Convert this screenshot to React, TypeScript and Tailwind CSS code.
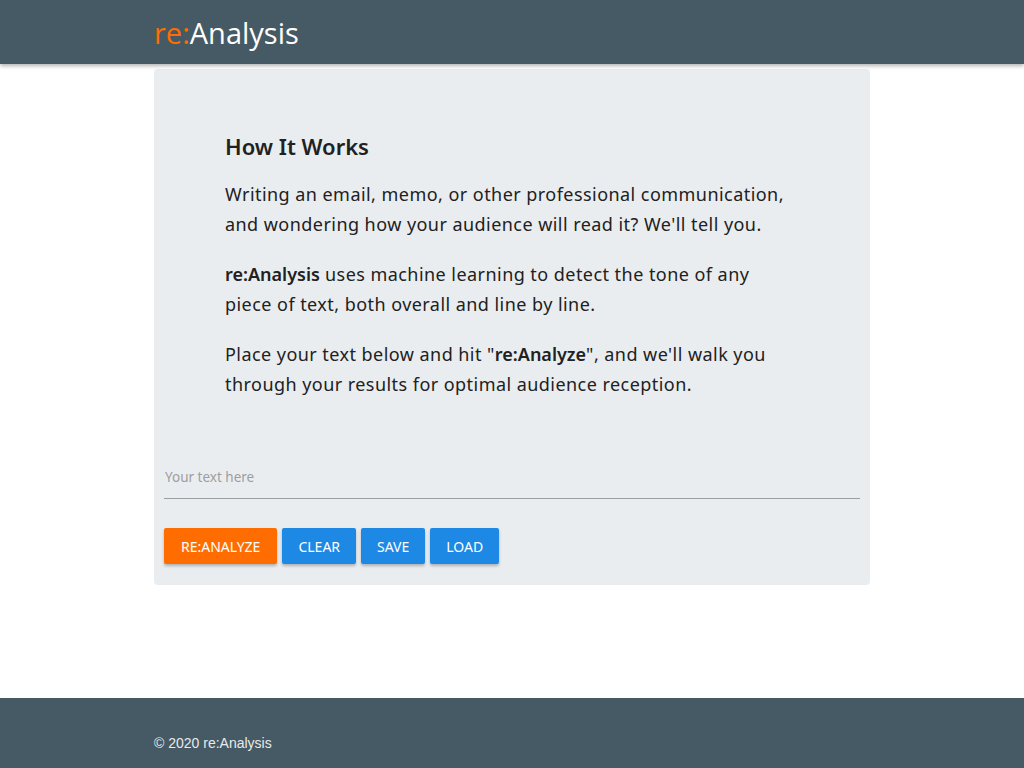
import React from 'react';

const font = { fontFamily: '"Noto Sans", Tahoma, sans-serif' };

// Action buttons below the text area
function ActionButton({ label, orange }: { label: string; orange?: boolean }) {
  return (
    <button
      className={
        orange
          ? 'h-9 px-[17px] rounded-[2px] bg-[#ff6d00] text-white text-[14px] shadow-[0_2px_3px_rgba(0,0,0,0.25)]'
          : 'h-9 px-[16px] rounded-[2px] bg-[#1e88e5] text-white text-[14px] shadow-[0_2px_3px_rgba(0,0,0,0.25)]'
      }
    >
      {label}
    </button>
  );
}

export default function App() {
  return (
    <div className="min-h-[768px] flex flex-col bg-white" style={font}>
      {/* Header */}
      <header className="h-16 bg-[#455a64] shadow-[0_2px_4px_rgba(0,0,0,0.3)] relative z-10">
        <div className="w-[716px] mx-auto h-full flex items-center">
          <span className="text-[29px] leading-none text-white" style={{ fontFamily: '"Open Sans", sans-serif' }}>
            <span className="text-[#ff6d00]">re:</span>Analysis
          </span>
        </div>
      </header>

      {/* Main card */}
      <main className="flex-1">
        <div className="w-[716px] mx-auto mt-[5px] bg-[#eaedf0] rounded-[4px] px-[10px] pb-[21px]">
          <div className="pl-[61px] pr-[60px] pt-[62px] pb-[44px] text-[#212121]">
            <h2 className="text-[22px] font-semibold mb-[18px] leading-[30px]">How It Works</h2>
            <p className="text-[18px] leading-[30px] mb-5 tracking-[0.45px]">
              Writing an email, memo, or other professional communication, and wondering how your audience
              will read it? We'll tell you.
            </p>
            <p className="text-[18px] leading-[30px] mb-5 tracking-[0.45px]">
              <b className="font-semibold tracking-normal">re:Analysis</b> uses machine learning to detect the tone
              of any piece of text, both overall and line by line.
            </p>
            <p className="text-[18px] leading-[30px] tracking-[0.45px]">
              Place your text below and hit "<b className="font-semibold tracking-normal">re:Analyze</b>", and
              we'll walk you through your results for optimal audience reception.
            </p>
          </div>

          <div className="pt-[21px] border-b border-[#9e9e9e] pb-[10px]">
            <input
              className="w-full bg-transparent outline-none text-[13.5px] text-[#212121] placeholder:text-[#9e9e9e] px-[1px]"
              placeholder="Your text here"
            />
          </div>

          <div className="flex gap-[5px] mt-[29px]">
            <ActionButton label="RE:ANALYZE" orange />
            <ActionButton label="CLEAR" />
            <ActionButton label="SAVE" />
            <ActionButton label="LOAD" />
          </div>
        </div>
      </main>

      {/* Footer */}
      <footer className="h-[70px] bg-[#455a64]">
        <div
          className="w-[716px] mx-auto pt-[35px] text-[14px] text-[#e8eaeb]"
          style={{ fontFamily: '"Liberation Sans", Arial, sans-serif' }}
        >
          © 2020 re:Analysis
        </div>
      </footer>
    </div>
  );
}
